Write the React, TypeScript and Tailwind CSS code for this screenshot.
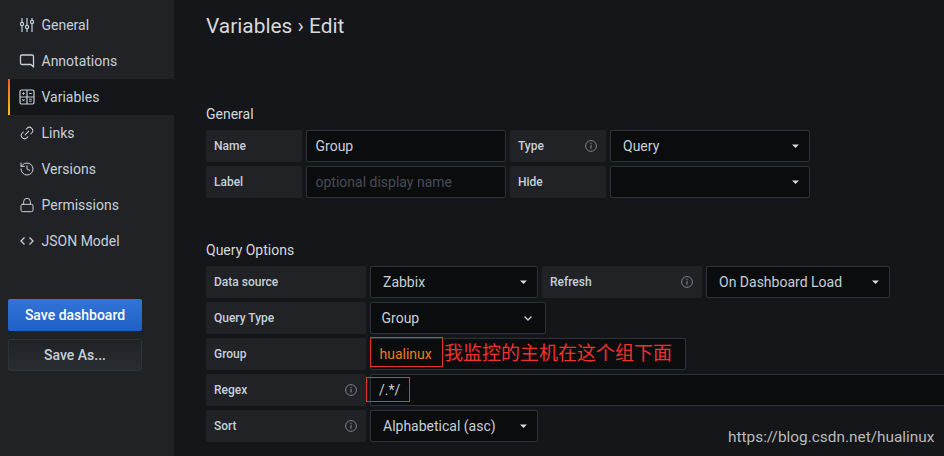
import type { ReactNode } from "react";
import { History, Link2, Lock } from "lucide-react";

function SlidersIcon() {
  return (
    <svg width="16" height="16" viewBox="0 0 16 16" fill="none" stroke="#c7d0d9" strokeWidth="1.2">
      <path d="M3 1v4M3 9v6M8 1v7M8 12v3M13 1v2M13 7v8" />
      <circle cx="3" cy="7" r="1.6" />
      <circle cx="8" cy="10" r="1.6" />
      <circle cx="13" cy="5" r="1.6" />
    </svg>
  );
}

function CommentIcon() {
  return (
    <svg width="16" height="16" viewBox="0 0 16 16" fill="none" stroke="#c7d0d9" strokeWidth="1.3">
      <path d="M3 2h10a1.5 1.5 0 0 1 1.5 1.5V14l-2.5-2.5H3A1.5 1.5 0 0 1 1.5 10V3.500A1.500 1.500 0 0 1 3 2z" strokeLinejoin="round" />
    </svg>
  );
}

function CalculatorIcon() {
  return (
    <svg width="16" height="16" viewBox="0 0 16 16" fill="none" stroke="#c7d0d9" strokeWidth="1.2">
      <rect x="1" y="1" width="14" height="14" rx="1.5" />
      <path d="M8 1v14M1 8h14" />
      <path d="M3.300 4.500h2.400M4.500 3.300v2.400M10.200 4.500h2.600M3.500 10.200l2 2M5.500 10.200l-2 2M10.200 10.200h2.600M10.200 12.200h2.600" strokeWidth="1" />
    </svg>
  );
}

function CodeIcon() {
  return (
    <svg width="16" height="16" viewBox="0 0 16 16" fill="none" stroke="#c7d0d9" strokeWidth="1.3">
      <path d="M5.500 4.500 2 8l3.500 3.500M10.500 4.500 14 8l-3.500 3.500" />
    </svg>
  );
}

function InfoIcon() {
  return (
    <svg width="12" height="12" viewBox="0 0 12 12" fill="none" stroke="#7b8087" strokeWidth="1">
      <circle cx="6" cy="6" r="5.400" />
      <path d="M6 5.300v3.200" strokeWidth="1.300" />
      <path d="M6 3.200v1" strokeWidth="1.300" />
    </svg>
  );
}

function Caret() {
  return (
    <svg width="7" height="4" viewBox="0 0 7 4" className="shrink-0">
      <path d="M0 0.500h7L3.500 4z" fill="#d8d9da" />
    </svg>
  );
}

function SideItem({ icon, label, active }: { icon: ReactNode; label: string; active?: boolean }) {
  return (
    <div className={`flex items-center h-9 ml-2 pl-[9px] gap-[6.5px] text-[14px] text-[#c7d0d9] ${active ? "bg-[#141619] border-l-2 [border-image:linear-gradient(#f05a28,#fbca0a)_1]" : "border-l-2 border-transparent"}`}>
      {icon}
      <span>{label}</span>
    </div>
  );
}

function FieldLabel({ text, width, info }: { text: string; width: string; info?: boolean }) {
  return (
    <div className={`flex items-center justify-between h-8 pl-2 pr-[9px] bg-[#202226] rounded-[2px] text-[12px] font-medium text-[#c7d0d9] shrink-0 ${width}`}>
      <span>{text}</span>
      {info && <InfoIcon />}
    </div>
  );
}

function SelectBox({ value, width, chevron }: { value: string; width: string; chevron?: boolean }) {
  return (
    <div className={`flex items-center justify-between h-8 bg-[#0b0c0e] border border-[#2c3235] rounded-[2px] text-[14px] text-[#c7d0d9] shrink-0 ${width} ${chevron ? "pl-[10.5px] pr-[13px]" : "pl-[12px] pr-[10px]"}`}>
      <span>{value}</span>
      {chevron ? (
        <svg width="8" height="5" viewBox="0 0 8 5" fill="none" stroke="#c7d0d9" strokeWidth="1.300">
          <path d="M0.500 0.500 4 4l3.500-3.500" />
        </svg>
      ) : (
        <Caret />
      )}
    </div>
  );
}

export default function App() {
  return (
    <div className="relative flex w-[944px] h-[456px] overflow-hidden bg-[#141619] font-['Roboto',sans-serif]">
      <aside className="w-[174px] shrink-0 bg-[#202226] pt-[7px]">
        <SideItem icon={<SlidersIcon />} label="General" />
        <SideItem icon={<CommentIcon />} label="Annotations" />
        <SideItem icon={<CalculatorIcon />} label="Variables" active />
        <SideItem icon={<Link2 size={16} color="#c7d0d9" strokeWidth={1.500} className="-rotate-45" />} label="Links" />
        <SideItem icon={<History size={16} color="#c7d0d9" strokeWidth={1.500} />} label="Versions" />
        <SideItem icon={<Lock size={16} color="#c7d0d9" strokeWidth={1.500} />} label="Permissions" />
        <SideItem icon={<CodeIcon />} label="JSON Model" />
        <div className="flex flex-col gap-2 mt-[40px] mx-2 w-[134px]">
          <button className="h-8 rounded-[2px] bg-gradient-to-b from-[#3274d9] to-[#1f60c4] text-[14px] font-medium text-white">Save dashboard</button>
          <button className="h-8 rounded-[2px] bg-gradient-to-b from-[#202226] to-[#292c30] border border-[#2c3235] text-[14px] font-medium text-[#c7d0d9]">Save As...</button>
        </div>
      </aside>

      <main className="flex-1 min-w-0 pl-8 pt-[10px]">
        <h1 className="text-[20.9px] leading-[32px] font-normal text-[#d8d9da]">Variables › Edit</h1>

        <h2 className="mt-[63px] text-[14px] leading-[18px] font-normal text-[#d8d9da]">General</h2>
        <div className="flex flex-col gap-1 mt-[7px]">
          <div className="flex gap-1">
            <FieldLabel text="Name" width="w-[96px]" />
            <div className="flex items-center w-[200px] h-8 pl-[8.5px] bg-[#0b0c0e] border border-[#2c3235] rounded-[2px] text-[14px] text-[#c7d0d9]">Group</div>
            <FieldLabel text="Type" width="w-[96px]" info />
            <SelectBox value="Query" width="w-[200px]" />
          </div>
          <div className="flex gap-1">
            <FieldLabel text="Label" width="w-[96px]" />
            <div className="flex items-center w-[200px] h-8 pl-[8.5px] bg-[#0b0c0e] border border-[#2c3235] rounded-[2px] text-[14px] text-[#464c54]">optional display name</div>
            <FieldLabel text="Hide" width="w-[96px]" />
            <SelectBox value="" width="w-[200px]" />
          </div>
        </div>

        <h2 className="mt-[43px] text-[14px] leading-[18px] font-normal text-[#d8d9da]">Query Options</h2>
        <div className="flex flex-col gap-1 mt-[7px]">
          <div className="flex gap-1">
            <FieldLabel text="Data source" width="w-[160px]" />
            <SelectBox value="Zabbix" width="w-[168px]" />
            <FieldLabel text="Refresh" width="w-[160px]" info />
            <SelectBox value="On Dashboard Load" width="w-[184px]" />
          </div>
          <div className="flex gap-1">
            <FieldLabel text="Query Type" width="w-[160px]" />
            <SelectBox value="Group" width="w-[176px]" chevron />
          </div>
          <div className="flex gap-1">
            <FieldLabel text="Group" width="w-[160px]" />
            <div className="flex items-center w-[316px] h-8 pl-[8.5px] bg-[#0b0c0e] border border-[#2c3235] rounded-[2px] text-[14px] text-[#eb7b18]">hualinux</div>
          </div>
          <div className="flex gap-1">
            <FieldLabel text="Regex" width="w-[160px]" info />
            <div className="flex items-center flex-1 h-8 pl-[8px] bg-[#0b0c0e] border-y border-l border-[#2c3235] rounded-l-[2px] text-[14px] text-[#c7d0d9]">/.*/</div>
          </div>
          <div className="flex gap-1">
            <FieldLabel text="Sort" width="w-[160px]" info />
            <SelectBox value="Alphabetical (asc)" width="w-[168px]" />
          </div>
        </div>
      </main>

      {/* red annotations drawn over the screenshot */}
      <div className="absolute left-[370px] top-[337px] w-[73px] h-[30px] border border-[#e5332f]" />
      <div className="absolute left-[366px] top-[377px] w-[44px] h-[25px] border border-[#e5332f]" />
      <div className="absolute left-[444px] top-[338px] text-[19px] leading-[28px] text-[#f0322c] font-['Noto_Sans_CJK_SC',sans-serif]">我监控的主机在这个组下面</div>
      <div className="absolute left-[728px] top-[427px] text-[15.4px] leading-[20px] text-[#b9bbbd]">https://blog.csdn.net/hualinux</div>
    </div>
  );
}
